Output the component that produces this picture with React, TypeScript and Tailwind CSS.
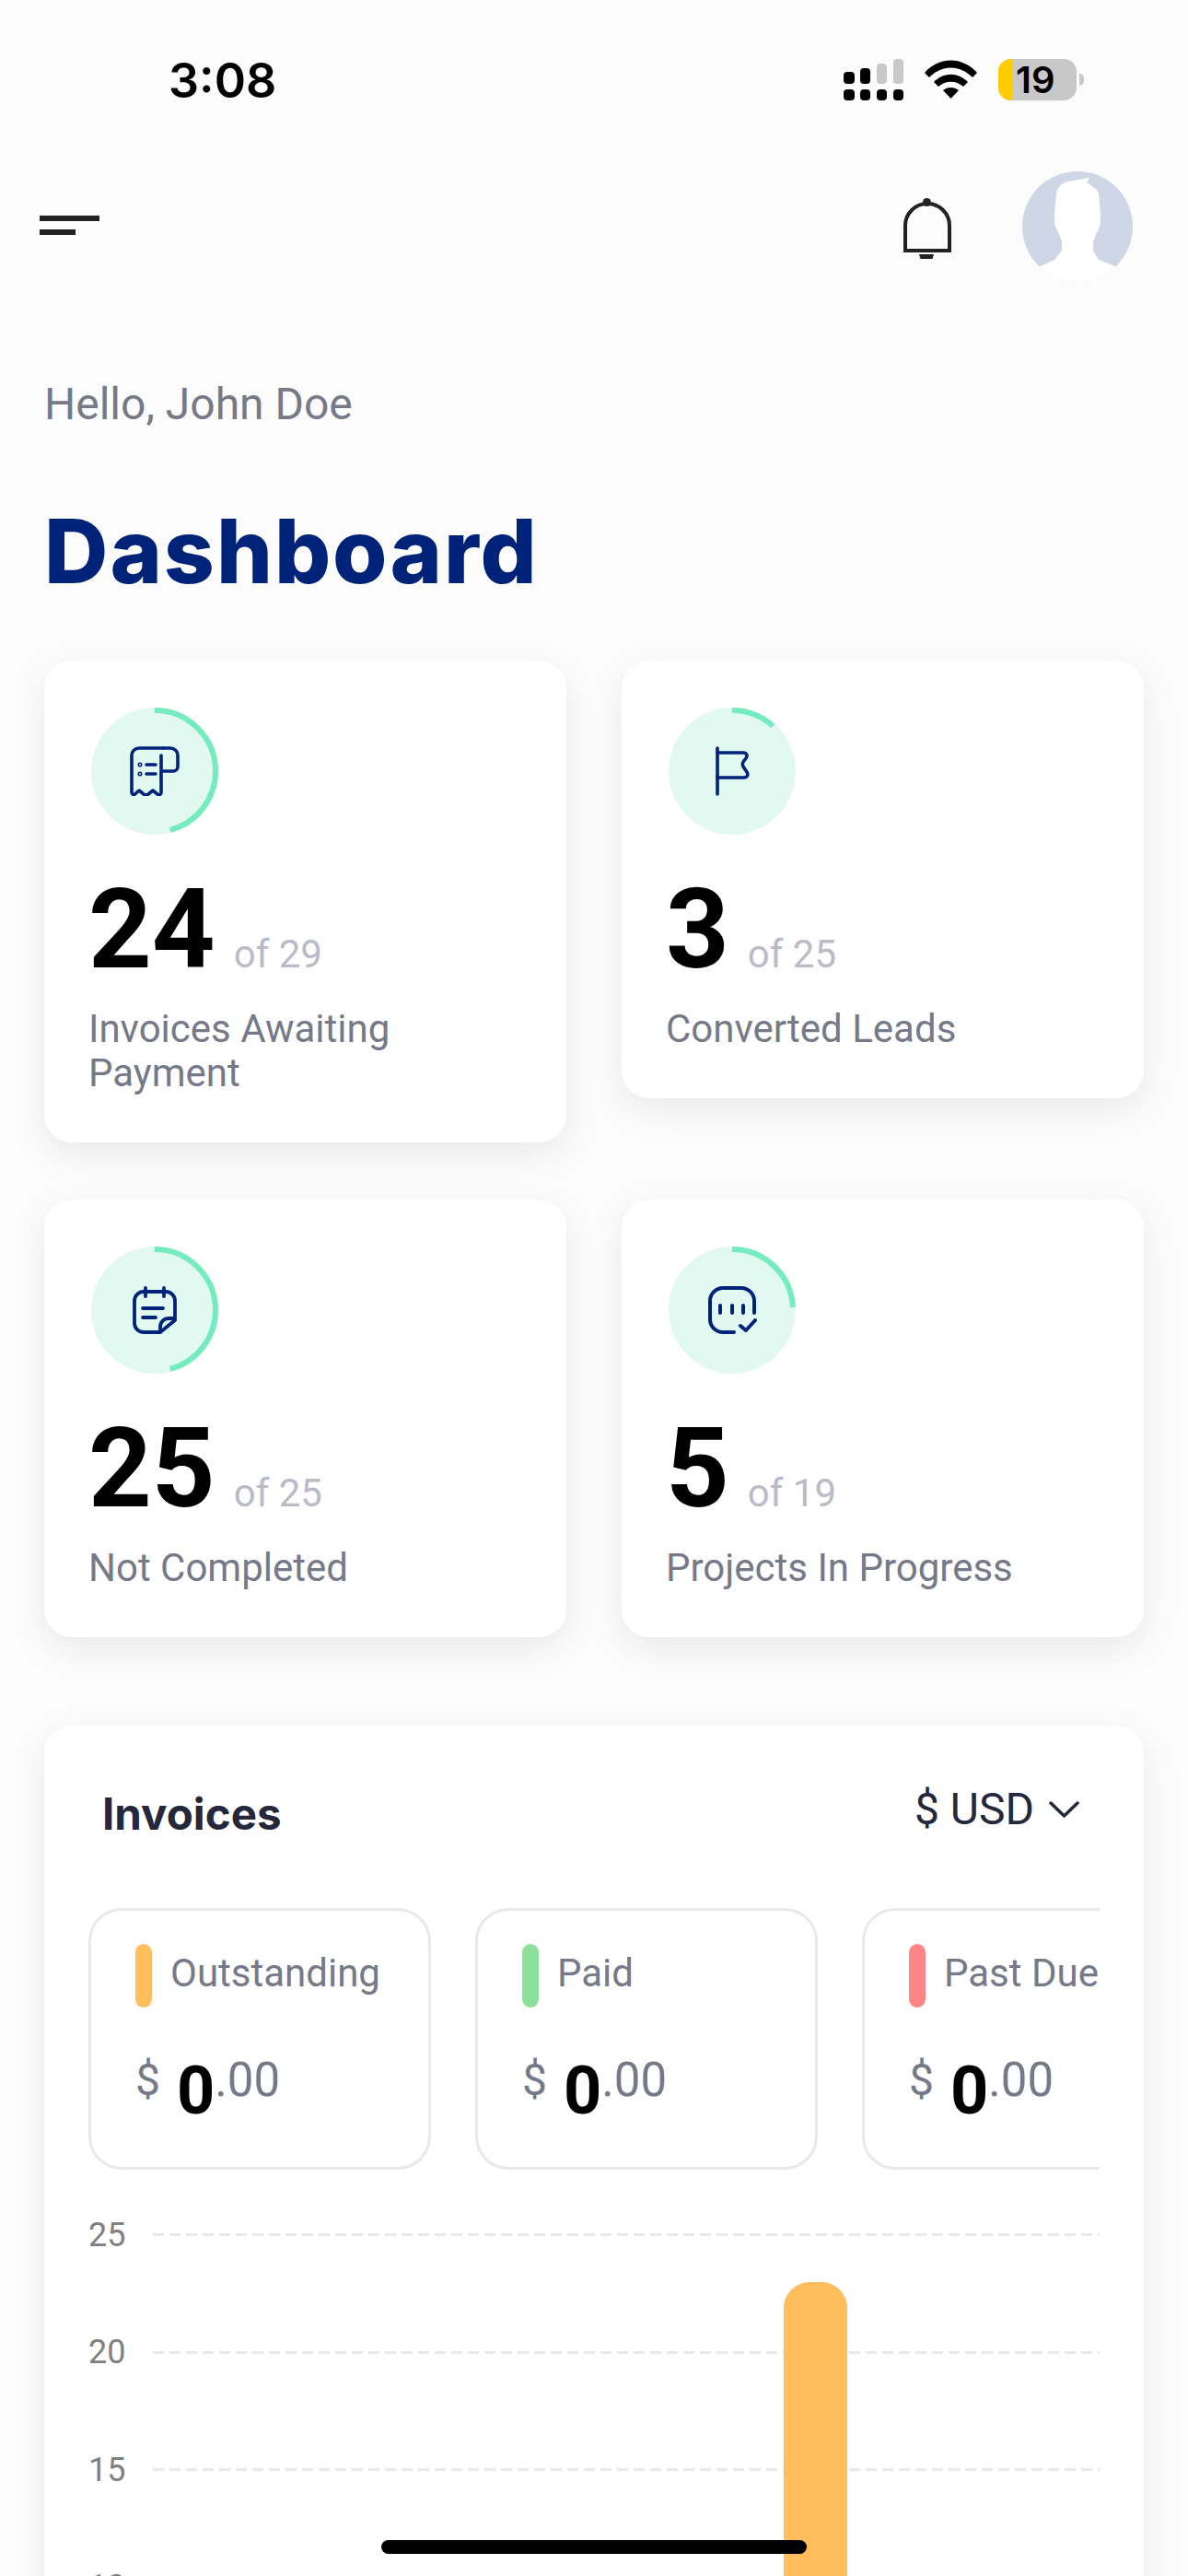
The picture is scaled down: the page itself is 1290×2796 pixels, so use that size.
import React from "react";

const NAVY = "#00237a";

const ReceiptIcon = () => (
  <svg width="54" height="54" viewBox="0 0 54 54" fill="none" stroke={NAVY} strokeWidth="3.600" strokeLinecap="round" strokeLinejoin="round">
    <path d="M36 2H10a8 8 0 0 0-8 8v40c0 2 2 3 3.500 2l4.500-4 5 4c2 1.500 3 1.500 5 0l5-4 5 4c2 1.500 4 .5 4-2V10" />
    <path d="M36 2h8a8 8 0 0 1 8 8v12a5 5 0 0 1-5 5H36" />
    <path d="M18 20h10M18 30h10" />
    <circle cx="11" cy="20" r=".8" strokeWidth="3.400" />
    <circle cx="11" cy="30" r=".8" strokeWidth="3.400" />
  </svg>
);

const FlagIcon = () => (
  <svg width="38" height="54" viewBox="0 0 38 54" fill="none" stroke={NAVY} strokeWidth="3.600" strokeLinecap="round" strokeLinejoin="round">
    <path d="M3 2v50" />
    <path d="M3 7h28c4 0 5 3 3 6l-3 4c-1 2-1 3 0 5l4 6c2 3 0 6-3 6H3" />
  </svg>
);

const NoteIcon = () => (
  <svg width="48" height="52" viewBox="0 0 48 52" fill="none" stroke={NAVY} strokeWidth="3.800" strokeLinecap="round" strokeLinejoin="round">
    <path d="M14 2v9M34 2v9" />
    <path d="M30 50H12A10 10 0 0 1 2 40V16A10 10 0 0 1 12 6h24a10 10 0 0 1 10 10v21z" />
    <path d="M11 24h22M11 34h14" />
    <path d="M30 50v-6a9 9 0 0 1 9-9h7" />
  </svg>
);

const ProjectIcon = () => (
  <svg width="54" height="54" viewBox="0 0 54 54" fill="none" stroke={NAVY} strokeWidth="4" strokeLinecap="round" strokeLinejoin="round">
    <path d="M29 51H17A14 14 0 0 1 3 37V17A14 14 0 0 1 17 3h20a14 14 0 0 1 14 14v13" />
    <path d="M14 22v8M27 22v8M39 22v8" />
    <path d="M36 44l6 5 10-11" />
  </svg>
);

const Ring = ({ angle, children }: { angle: number; children: React.ReactNode }) => {
  const circ = 2 * Math.PI * 66;
  return (
    <div className="relative ml-[3px] w-[138px] h-[138px] flex items-center justify-center">
      <svg width="138" height="138" viewBox="0 0 138 138" className="absolute inset-0">
        <circle cx="69" cy="69" r="69" fill="#e1f9f0" />
        <circle
          cx="69"
          cy="69"
          r="66"
          fill="none"
          stroke="#75ecc0"
          strokeWidth="6"
          strokeDasharray={`${(circ * angle) / 360} ${circ}`}
          transform="rotate(-90 69 69)"
        />
      </svg>
      <div className="relative flex">{children}</div>
    </div>
  );
};

const stats = [
  { value: "24", of: "of 29", label: ["Invoices Awaiting", "Payment"], angle: 165, icon: <ReceiptIcon /> },
  { value: "3", of: "of 25", label: ["Converted Leads"], angle: 42, icon: <FlagIcon /> },
  { value: "25", of: "of 25", label: ["Not Completed"], angle: 165, icon: <NoteIcon /> },
  { value: "5", of: "of 19", label: ["Projects In Progress"], angle: 87, icon: <ProjectIcon /> },
];

const totals = [
  { name: "Outstanding", color: "bg-[#ffbd5c]" },
  { name: "Paid", color: "bg-[#8ce099]" },
  { name: "Past Due", color: "bg-[#ff8585]" },
];

const StatusBar = () => (
  <div className="h-[186px] flex justify-between items-start pl-[183px] pr-[113px] pt-[62px]">
    <span className="font-['Inter'] font-semibold text-[52px] leading-[52px] text-black">3:08</span>
    <div className="flex items-start gap-[23px] mt-[2px]">
      <svg width="65" height="45" viewBox="0 0 65 45">
        <rect x="0" y="14" width="12" height="13" rx="4" fill="#000" />
        <rect x="18" y="10" width="11" height="17" rx="4" fill="#000" />
        <rect x="36" y="5" width="11" height="22" rx="4" fill="#c8c8c8" />
        <rect x="54" y="0" width="11" height="27" rx="4" fill="#c8c8c8" />
        <rect x="0" y="33" width="12" height="12" rx="4" fill="#000" />
        <rect x="18" y="33" width="11" height="12" rx="4" fill="#000" />
        <rect x="36" y="33" width="11" height="12" rx="4" fill="#000" />
        <rect x="54" y="33" width="11" height="12" rx="4" fill="#000" />
      </svg>
      <svg width="57" height="44" viewBox="0 0 57 44" className="mt-[1px]">
        <path d="M0 14C16-4 41-4 57 14l-5 5C38 5 19 5 5 19z" fill="#000" />
        <path d="M10 24c11-11 26-11 37 0l-5 5c-8-7-19-7-27 0z" fill="#000" />
        <path d="M20 33c5-4 12-4 17 0L28.500 42z" fill="#000" />
      </svg>
      <div className="flex items-center gap-[3px]">
        <div className="flex w-[85px] h-[45px] rounded-[14px] bg-[#c8c8c8]">
          <div className="w-[16px] rounded-l-[14px] bg-[#ffcc00]" />
          <span className="pl-[3px] font-['Inter'] font-semibold text-[40px] leading-[45px] text-black">19</span>
        </div>
        <div className="w-[5px] h-[13px] rounded-r-full bg-[#c8c8c8]" />
      </div>
    </div>
  </div>
);

const Header = () => (
  <div className="h-[120px] flex items-center justify-between pl-[43px] pr-[60px]">
    <div className="flex flex-col gap-[9px] -mt-[4px]">
      <div className="w-[65px] h-[6px] bg-[#222222]" />
      <div className="w-[39px] h-[6px] bg-[#222222]" />
    </div>
    <div className="flex items-center gap-[77px]">
      <svg width="52" height="66" viewBox="0 0 52 66" fill="none" className="mt-[3px]">
        <path d="M2 57V30a24 24 0 0 1 48 0v27z" stroke="#222222" strokeWidth="4" />
        <circle cx="25.500" cy="4.500" r="4.500" fill="#222222" />
        <path d="M17 61h16l-1.500 5h-13z" fill="#222222" />
      </svg>
      <svg width="120" height="120" viewBox="0 0 120 120">
        <clipPath id="avatar-clip">
          <circle cx="60" cy="60" r="60" />
        </clipPath>
        <g clipPath="url(#avatar-clip)">
          <rect width="120" height="120" fill="#cfd6e6" />
          <path
            d="M37 24L39 18Q44 12 50 11L73 7L70 12L81 20L83 24L85 47V57L77 76V86L83 96L101 103H120V120H0V103H20L35 96L43 86V76L35 57V47L37 24z"
            fill="#ffffff"
          />
        </g>
      </svg>
    </div>
  </div>
);

const App = () => {
  return (
    <div className="relative w-[1290px] h-[2796px] overflow-hidden bg-[#fcfcfc] font-['Roboto',sans-serif]">
      <StatusBar />
      <Header />

      <p className="mt-[106px] pl-[48px] text-[48px] leading-[54px] text-[#757988]">Hello, John Doe</p>
      <h1 className="mt-[87px] pl-[48px] font-['Inter'] font-extrabold text-[96px] leading-[90px] tracking-[2px] text-[#00237a]">
        Dashboard
      </h1>

      {/* stat cards */}
      <div className="mt-[74px] px-[48px] grid grid-cols-2 gap-x-[60px] gap-y-[62px]">
        {stats.map((stat) => (
          <div
            key={stat.label[0]}
            className="self-start bg-white rounded-[30px] pt-[51px] pb-[51px] pl-[48px] pr-[30px] shadow-[0_12px_40px_rgba(0,0,0,0.08)]"
          >
            <Ring angle={stat.angle}>{stat.icon}</Ring>
            <div className="mt-[43px] flex items-baseline gap-[20px]">
              <span className="text-[120px] leading-[120px] font-bold text-black">{stat.value}</span>
              <span className="text-[42px] text-[#b9bbc8]">{stat.of}</span>
            </div>
            <div className="mt-[24px] text-[42px] leading-[48px] text-[#757988]">
              {stat.label.map((line) => (
                <div key={line}>{line}</div>
              ))}
            </div>
          </div>
        ))}
      </div>

      {/* invoices */}
      <div className="mt-[96px] mx-[48px] h-[1000px] bg-white rounded-[30px] shadow-[0_12px_40px_rgba(0,0,0,0.08)] pt-[66px]">
        <div className="flex items-center justify-between pl-[63px] pr-[70px] h-[60px]">
          <h2 className="font-['Inter'] font-bold text-[47.500px] leading-[60px] text-[#25283d]">Invoices</h2>
          <div className="flex items-center gap-[16px] -mt-[10px] text-[48px] text-[#25283d]">
            <span>$ USD</span>
            <svg width="33" height="20" viewBox="0 0 33 20" fill="none" stroke="#25283d" strokeWidth="3.500" strokeLinecap="round" strokeLinejoin="round">
              <path d="M2 3l14.500 14L31 3" />
            </svg>
          </div>
        </div>

        <div className="mt-[72px] ml-[48px] mr-[48px] flex gap-[48px] overflow-hidden">
          {totals.map((total) => (
            <div key={total.name} className="shrink-0 w-[372px] h-[284px] rounded-[36px] border-[3px] border-[#e9e9e9] pl-[48px] pt-[36px]">
              <div className="flex items-center gap-[20px]">
                <div className={`w-[18px] h-[69px] rounded-full ${total.color}`} />
                <span className="-mt-[6px] text-[42px] whitespace-nowrap text-[#757988]">{total.name}</span>
              </div>
              <div className="mt-[49px] flex items-start text-[#757988]">
                <span className="text-[48px] leading-[60px]">$</span>
                <span className="ml-[18px] mt-[6px] text-[72px] leading-[72px] font-bold text-black">0</span>
                <span className="text-[51px] leading-[60px]">.00</span>
              </div>
            </div>
          ))}
        </div>

        {/* chart */}
        <div className="relative mt-[7px] ml-[48px] mr-[48px]">
          {["25", "20", "15", "10"].map((tick) => (
            <div key={tick} className="flex items-center h-[127.500px]">
              <span className="w-[70px] text-[36px] leading-[40px] text-[#808080]">{tick}</span>
              <div className="flex-1 h-[3px] bg-[repeating-linear-gradient(90deg,#e9e9e9_0_12px,transparent_12px_18px)]" />
            </div>
          ))}
          <div className="absolute left-[755px] top-[115px] w-[69px] h-[500px] rounded-t-[28px] bg-[#ffbd5c]" />
        </div>
      </div>

      {/* home indicator */}
      <div className="absolute left-[414px] top-[2757px] w-[462px] h-[15px] rounded-full bg-black" />
    </div>
  );
};

export default App;
